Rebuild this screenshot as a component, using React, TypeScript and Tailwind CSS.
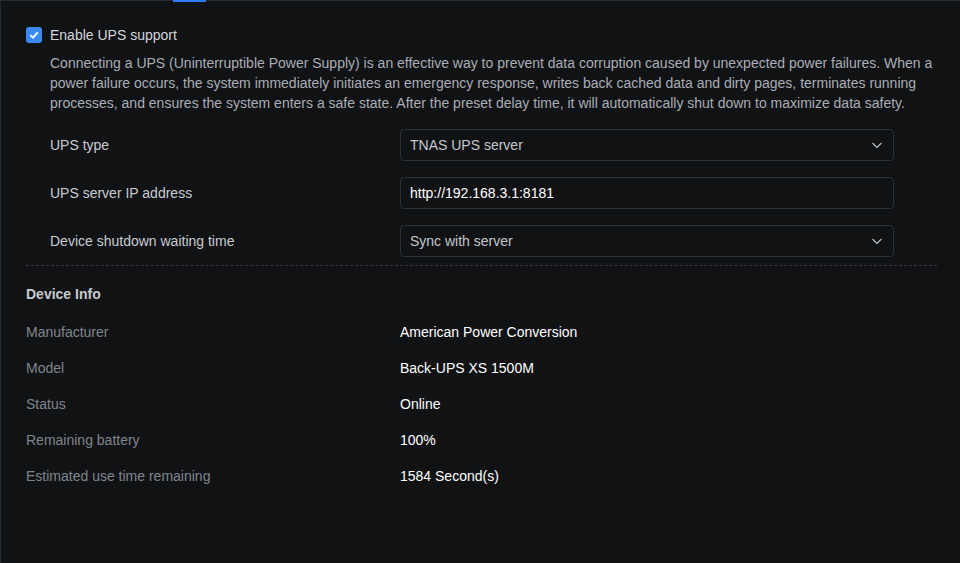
import { useState } from "react";

function Chevron() {
  return (
    <svg width="12" height="12" viewBox="0 0 12 12" fill="none" className="text-[#b8bcc3]">
      <path d="M1.5 4L6 8.5L10.5 4" stroke="currentColor" strokeWidth="1.2" />
    </svg>
  );
}

function SelectBox({ value }: { value: string }) {
  return (
    <div className="flex h-8 w-[494px] items-center justify-between rounded border border-[#2b2f36] pl-[9px] pr-[10px] text-[#c3c7cd]">
      <span>{value}</span>
      <Chevron />
    </div>
  );
}

export default function App() {
  const [enabled, setEnabled] = useState(true);

  const info = [
    { label: "Manufacturer", value: "American Power Conversion" },
    { label: "Model", value: "Back-UPS XS 1500M" },
    { label: "Status", value: "Online" },
    { label: "Remaining battery", value: "100%" },
    { label: "Estimated use time remaining", value: "1584 Second(s)" },
  ];

  return (
    <div
      className="relative h-[563px] w-[960px] border-l border-t border-[#272a30] bg-[#111214] text-[14px]"
      style={{ fontFamily: '"Liberation Sans", Arial, sans-serif' }}
    >
      {/* active tab underline */}
      <div className="absolute left-[172px] top-[-1px] h-[2px] w-[33px] bg-[#2f7cf6]" />

      <div className="px-[25px] pt-[24px]">
        {/* Enable toggle */}
        <label className="flex h-5 cursor-pointer items-center gap-2">
          <span
            onClick={() => setEnabled(!enabled)}
            className={`flex h-4 w-4 items-center justify-center rounded-[3px] ${enabled ? "bg-[#3a8af6]" : "border border-[#555]"}`}
          >
            {enabled && (
              <svg width="12" height="12" viewBox="0 0 12 12" fill="none">
                <path d="M2.3 6.2L4.9 8.7L9.8 3.4" stroke="white" strokeWidth="1.8" />
              </svg>
            )}
          </span>
          <span className="text-[#d3d6db]">Enable UPS support</span>
        </label>

        <p className="mt-2 pl-6 leading-5 text-[#a9aeb6]">
          Connecting a UPS (Uninterruptible Power Supply) is an effective way to prevent data corruption caused by unexpected power failures. When a power failure occurs, the system immediately initiates an emergency response, writes back cached data and dirty pages, terminates running processes, and ensures the system enters a safe state. After the preset delay time, it will automatically shut down to maximize data safety.
        </p>

        {/* Form */}
        <div className="mt-4 flex flex-col gap-4 pl-6">
          <div className="flex items-center">
            <div className="w-[350px] text-[#c9ccd1]">UPS type</div>
            <SelectBox value="TNAS UPS server" />
          </div>
          <div className="flex items-center">
            <div className="w-[350px] text-[#c9ccd1]">UPS server IP address</div>
            <div className="flex h-8 w-[494px] items-center rounded border border-[#2b2f36] pl-[9px] text-white">
              http://192.168.3.1:8181
            </div>
          </div>
          <div className="flex items-center">
            <div className="w-[350px] text-[#c9ccd1]">Device shutdown waiting time</div>
            <SelectBox value="Sync with server" />
          </div>
        </div>

        <div className="mt-2 w-[911px] border-t border-dashed border-[#34373d]" />

        {/* Device info */}
        <div className="mt-[18px] font-semibold leading-5 text-[#c8cbd0]">Device Info</div>
        <div className="mt-[10px]">
          {info.map((row) => (
            <div key={row.label} className="flex h-9 items-center">
              <div className="w-[374px] text-[#80858d]">{row.label}</div>
              <div className="text-white">{row.value}</div>
            </div>
          ))}
        </div>
      </div>
    </div>
  );
}
